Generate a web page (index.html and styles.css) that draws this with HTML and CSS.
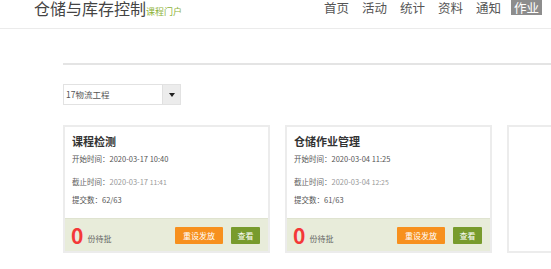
FILE: index.html
```html
<!DOCTYPE html>
<html lang="zh">
<head>
<meta charset="utf-8">
<title>仓储与库存控制</title>
<link rel="stylesheet" href="styles.css">
</head>
<body>
<header class="topbar">
  <div class="brand"><span class="brand-name">仓储与库存控制</span><span class="brand-sub">课程门户</span></div>
  <nav class="nav">
    <a class="nav-item">首页</a>
    <a class="nav-item">活动</a>
    <a class="nav-item">统计</a>
    <a class="nav-item">资料</a>
    <a class="nav-item">通知</a>
    <a class="nav-item active">作业</a>
  </nav>
</header>
<main class="main">
  <div class="rule"></div>
  <div class="select">
    <span class="select-text">17物流工程</span>
    <span class="select-btn"><span class="caret"></span></span>
  </div>
  <div class="cards">
    <div class="card">
      <div class="card-body">
        <div class="card-title">课程检测</div>
        <div class="row row-start">开始时间：2020-03-17 10:40</div>
        <div class="row row-end">截止时间：<span class="date">2020-03-17 <small>11:41</small></span></div>
        <div class="row">提交数：62/63</div>
      </div>
      <div class="card-foot">
        <span class="zero">0</span><span class="pending">份待批</span>
        <span class="spacer"></span>
        <span class="btn btn-orange">重设发放</span>
        <span class="btn btn-green">查看</span>
      </div>
    </div>
    <div class="card">
      <div class="card-body">
        <div class="card-title">仓储作业管理</div>
        <div class="row row-start">开始时间：2020-03-04 11:25</div>
        <div class="row row-end">截止时间：<span class="date">2020-03-04 <small>12:25</small></span></div>
        <div class="row">提交数：61/63</div>
      </div>
      <div class="card-foot">
        <span class="zero">0</span><span class="pending">份待批</span>
        <span class="spacer"></span>
        <span class="btn btn-orange">重设发放</span>
        <span class="btn btn-green">查看</span>
      </div>
    </div>
    <div class="card card-empty"></div>
  </div>
</main>
</body>
</html>
```
FILE: styles.css
```css
* { box-sizing: border-box; }
html, body { margin: 0; padding: 0; }
body {
  width: 551px;
  height: 269px;
  overflow: hidden;
  background: #fff;
  font-family: "Noto Sans CJK SC", "Noto Sans", sans-serif;
  color: #333;
}
.topbar {
  height: 29px;
  border-bottom: 1px solid #ebebeb;
  display: flex;
  align-items: flex-start;
  justify-content: space-between;
  padding: 0 9px 0 34px;
}
.brand {
  display: flex;
  align-items: baseline;
  margin-top: -1px;
}
.brand-name {
  font-size: 16px;
  line-height: 18px;
  color: #444;
}
.brand-sub {
  font-size: 9px;
  line-height: 10px;
  color: #8db23a;
}
.nav {
  display: flex;
  gap: 13px;
  align-items: flex-start;
}
.nav-item {
  font-size: 12.5px;
  line-height: 15px;
  color: #555;
  display: block;
}
.nav-item.active {
  background: #8d8d8d;
  color: #fff;
  padding: 0 3px;
  margin-left: -3px;
}
.main {
  padding-left: 63px;
}
.rule {
  margin-top: 34px;
  height: 2px;
  background: #e4e4e4;
}
.select {
  margin-top: 19px;
  width: 118px;
  height: 21px;
  border: 1px solid #e2e2e2;
  display: flex;
  align-items: stretch;
}
.select-text {
  flex: 1;
  font-size: 8.5px;
  line-height: 19px;
  padding-left: 2px;
  color: #555;
}
.select-btn {
  width: 18px;
  background: #ececec;
  border-left: 1px solid #e0e0e0;
  display: flex;
  align-items: center;
  justify-content: center;
}
.caret {
  width: 0;
  height: 0;
  border-left: 3.5px solid transparent;
  border-right: 3.5px solid transparent;
  border-top: 4px solid #222;
}
.cards {
  margin-top: 20px;
  display: flex;
  gap: 15px;
}
.card {
  flex: 0 0 207px;
  height: 128px;
  border: 2px solid #ececec;
  display: flex;
  flex-direction: column;
  background: #fff;
}
.card-body {
  flex: 1;
  padding: 6px 0 0 7px;
}
.card-title {
  font-size: 11px;
  font-weight: bold;
  line-height: 16px;
  color: #333;
  margin-bottom: 5px;
}
.row {
  font-size: 7.5px;
  line-height: 10px;
  color: #555;
}
.row-start { margin-bottom: 13px; }
.row-end { margin-bottom: 8px; color: #666; }
.date { color: #999; }
.date small { font-size: 6.8px; }
.card-foot {
  height: 33px;
  background: #e8ecda;
  border-top: 1px solid #dfe3d0;
  display: flex;
  align-items: center;
  padding: 0 8px 0 6px;
}
.zero {
  font-size: 21px;
  font-weight: bold;
  color: #f43838;
  line-height: 20px;
}
.pending {
  font-size: 8px;
  color: #666;
  margin-left: 4px;
  align-self: flex-end;
  margin-bottom: 7px;
}
.spacer { flex: 1; }
.btn {
  height: 17px;
  font-size: 8px;
  line-height: 17px;
  color: #fff;
  text-align: center;
  border-radius: 1px;
}
.btn-orange {
  width: 48px;
  background: #f7901e;
}
.btn-green {
  width: 29px;
  background: #789b2d;
  margin-left: 8px;
}
.card-empty { flex: 0 0 207px; }
```
